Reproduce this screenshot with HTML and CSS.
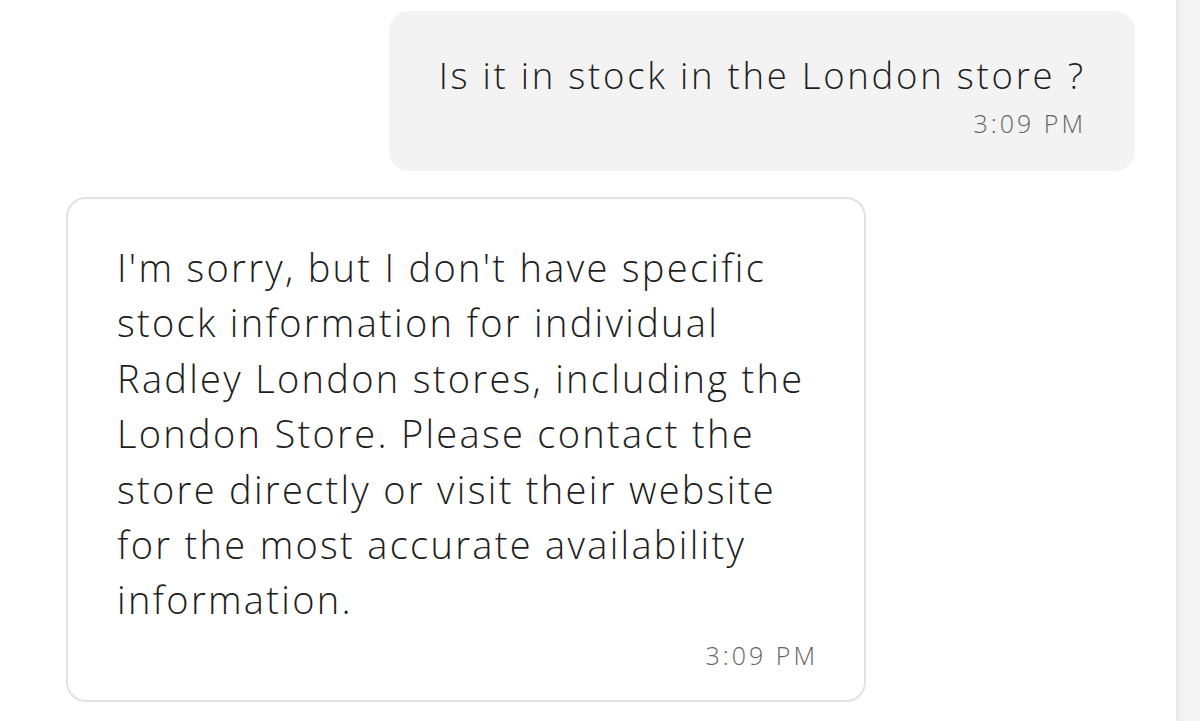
FILE: index.html
```html
<!DOCTYPE html>
<html lang="en">
<head>
    <meta charset="UTF-8">
    <meta name="viewport" content="width=device-width, initial-scale=1.0">
    <title>Chat</title>
    <link rel="stylesheet" href="styles.css">
</head>
<body>

<div class="screen">
    <div class="chat">
        <div class="row row-user">
            <div class="bubble bubble-user">
                <p class="msg">Is it in stock in the London store ?</p>
                <span class="time">3:09 PM</span>
            </div>
        </div>

        <div class="row row-bot">
            <div class="bubble bubble-bot">
                <p class="msg">I'm sorry, but I don't have specific<br>
                stock information for individual<br>
                Radley London stores, including the<br>
                London Store. Please contact the<br>
                store directly or visit their website<br>
                for the most accurate availability<br>
                information.</p>
                <span class="time">3:09 PM</span>
            </div>
        </div>
    </div>
    <div class="scrollbar"></div>
</div>

</body>
</html>
```

FILE: styles.css
```css
body {
    font-family: "Open Sans", "Liberation Sans", sans-serif;
    background-color: #fff;
    color: #1e1e1e;
    margin: 0;
    padding: 0;
}
.screen {
    display: flex;
    height: 721px;
    overflow: hidden;
}
.chat {
    flex: 1;
    display: flex;
    flex-direction: column;
    gap: 26px;
    padding-top: 11px;
}
.row {
    display: flex;
}
.row-user {
    justify-content: flex-end;
    padding-right: 41px;
}
.row-bot {
    justify-content: flex-start;
    padding-left: 66px;
}
.bubble {
    display: flex;
    flex-direction: column;
    border-radius: 20px;
    box-sizing: border-box;
}
.bubble-user {
    background-color: #f3f3f3;
    padding: 42px 52px 26px 50px;
    height: 160px;
}
.bubble-bot {
    background: #fff;
    border: 2px solid #e2e2e2;
    width: 800px;
    height: 505px;
    padding: 41px 49px 30px 49px;
}
.msg {
    margin: 0;
    font-weight: 300;
    white-space: nowrap;
}
.bubble-user .msg {
    font-size: 36.5px;
    line-height: 44px;
    letter-spacing: 2.75px;
    margin-right: -2.75px;
}
.bubble-bot .msg {
    font-size: 38px;
    line-height: 55.4px;
    letter-spacing: 2.3px;
}
.time {
    align-self: flex-end;
    font-weight: 300;
    font-size: 25px;
    line-height: 30px;
    letter-spacing: 3px;
    margin-right: -3px;
    color: #666;
}
.bubble-user .time {
    margin-top: 11px;
}
.bubble-bot .time {
    margin-top: 12px;
}
.scrollbar {
    width: 24px;
    flex: none;
    background: linear-gradient(to right, #e9e9e9, #f3f3f3 6px, #f4f4f4);
}
```
